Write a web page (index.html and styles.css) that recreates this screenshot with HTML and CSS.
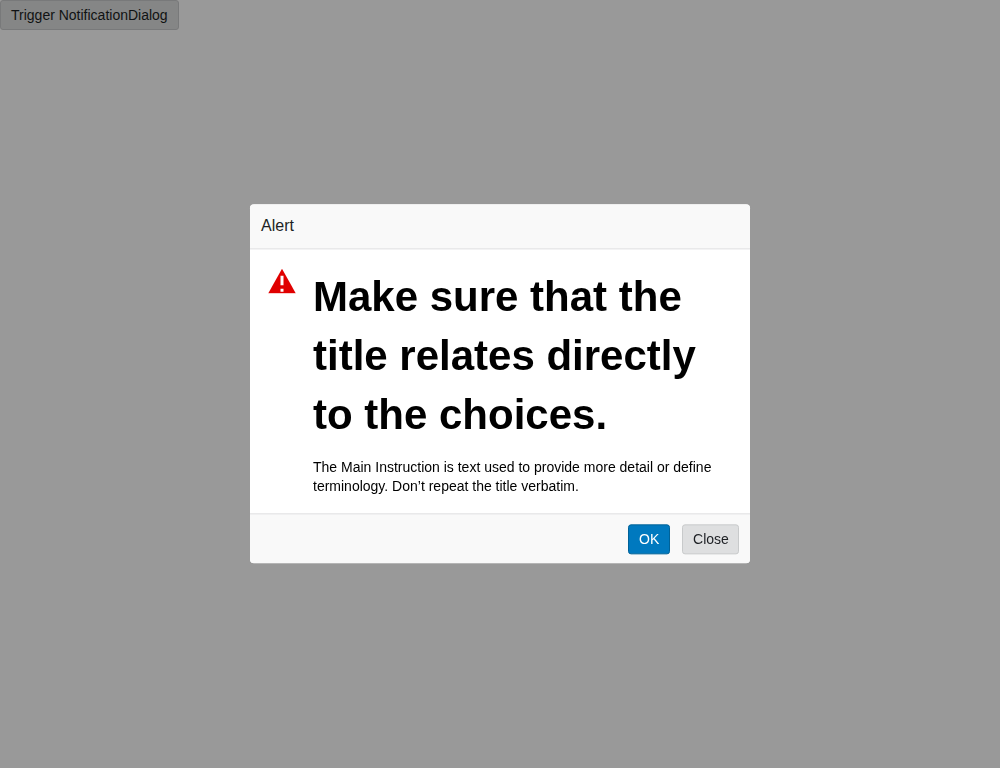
FILE: index.html
```html
<!DOCTYPE html>
<html lang="en">
<head>
<meta charset="utf-8">
<title>Notification Dialog</title>
<link rel="stylesheet" href="styles.css">
</head>
<body>
<button class="btn">Trigger NotificationDialog</button>
<div class="overlay"></div>
<section class="modal" role="dialog">
  <header class="modal-header">Alert</header>
  <div class="modal-body">
    <svg class="icon" viewBox="0 0 28 25" width="28" height="25"><path fill="#e00000" d="M14 0 28 25H0z"/><path fill="#fff" d="M12.500 7h3v9.500h-3zM12.500 20h3v3h-3z"/></svg>
    <div class="content">
      <h1 class="title">Make sure that the title relates directly to the choices.</h1>
      <p class="message">The Main Instruction is text used to provide more detail or define terminology. Don’t repeat the title verbatim.</p>
    </div>
  </div>
  <footer class="modal-footer">
    <button class="btn btn-primary">OK</button>
    <button class="btn">Close</button>
  </footer>
</section>
</body>
</html>
```
FILE: styles.css
```css
* { box-sizing: border-box; }
body { margin: 0; background: #fff; color: #000; font: 14px/1.4 "Liberation Sans", Arial, sans-serif; }
.btn { display: block; height: 30px; margin: 0; padding: 0 10px; border: 1px solid #c8cacb; border-radius: 3px; background: #dedfe0; color: #1c1f23; font: 14px/28px "Liberation Sans", Arial, sans-serif; white-space: nowrap; }
.btn-primary { background: #0079bf; border-color: #006298; color: #fff; }
.overlay { position: fixed; inset: 0; background: rgba(0, 0, 0, .4); }
.modal { position: fixed; top: 50%; left: 50%; transform: translate(-50%, -179.650px); width: 500px; height: 359px; display: flex; flex-direction: column; border-radius: 4px; overflow: hidden; background: #fff; }
.modal-header { height: 45px; padding: 0 11px; border-bottom: 1px solid #e0e1e2; background: #f9f9f9; color: #1c1f23; font-size: 16px; line-height: 43px; }
.modal-body { height: 264px; display: flex; padding: 18px 18px 0; }
.icon { flex: none; margin: 1px 17px 0 0; }
.icon path { transform: translateY(.3px); }
.title { margin: 0; font-size: 42px; line-height: 59px; font-weight: 700; }
.message { margin: 14px 0 0; line-height: 19px; }
.modal-footer { height: 50px; display: flex; justify-content: flex-end; gap: 11.800px; padding: 10px 10.600px; border-top: 1px solid #e0e1e2; background: #f9f9f9; }
.modal-footer .btn { padding: 0 9.600px 0 10.400px; }
```
